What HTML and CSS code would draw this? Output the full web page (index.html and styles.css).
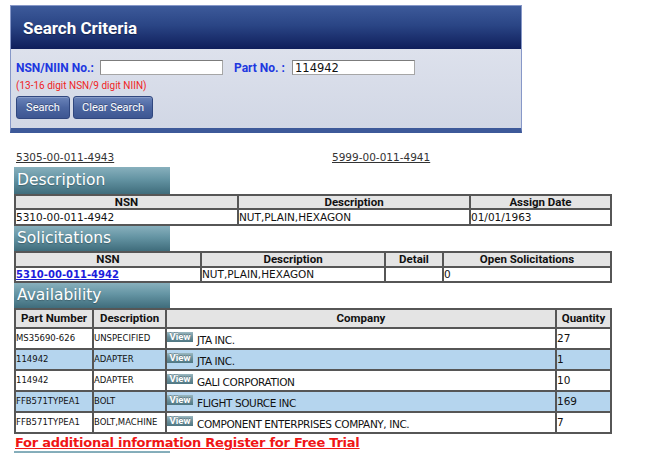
FILE: index.html
```html
<!DOCTYPE html>
<html lang="en">
<head>
<meta charset="utf-8">
<title>NSN Search</title>
<link rel="stylesheet" href="styles.css">
</head>
<body>
<div class="panel">
  <div class="panel-head">Search Criteria</div>
  <div class="panel-body">
    <div class="field-row">
      <span class="lbl lbl-nsn">NSN/NIIN No.:</span>
      <input class="txt" type="text" value="">
      <span class="lbl lbl-part">Part No. :</span>
      <input class="txt" type="text" value="114942">
    </div>
    <div class="hint">(13-16 digit NSN/9 digit NIIN)</div>
    <div class="btns">
      <button class="btn btn-search" type="button">Search</button>
      <button class="btn btn-clear" type="button">Clear Search</button>
    </div>
  </div>
</div>

<div class="content">
  <div class="nav-links">
    <a class="nav-link" href="#">5305-00-011-4943</a>
    <a class="nav-link" href="#">5999-00-011-4941</a>
  </div>

  <div class="tab tab-desc">Description</div>
  <table class="grid desc">
    <thead><tr><th>NSN</th><th>Description</th><th>Assign Date</th></tr></thead>
    <tbody><tr><td>5310-00-011-4942</td><td>NUT,PLAIN,HEXAGON</td><td>01/01/1963</td></tr></tbody>
  </table>

  <div class="tab">Solicitations</div>
  <table class="grid solic">
    <thead><tr><th>NSN</th><th>Description</th><th>Detail</th><th>Open Solicitations</th></tr></thead>
    <tbody><tr><td><a class="nsn-link" href="#">5310-00-011-4942</a></td><td>NUT,PLAIN,HEXAGON</td><td></td><td>0</td></tr></tbody>
  </table>

  <div class="tab">Availability</div>
  <table class="grid avail">
    <thead><tr><th>Part Number</th><th>Description</th><th>Company</th><th>Quantity</th></tr></thead>
    <tbody>
      <tr><td class="small">MS35690-626</td><td class="small">UNSPECIFIED</td><td><div class="co"><span class="view">View</span><span class="co-name">JTA INC.</span></div></td><td>27</td></tr>
      <tr><td class="small">114942</td><td class="small">ADAPTER</td><td><div class="co"><span class="view">View</span><span class="co-name">JTA INC.</span></div></td><td>1</td></tr>
      <tr><td class="small">114942</td><td class="small">ADAPTER</td><td><div class="co"><span class="view">View</span><span class="co-name">GALI CORPORATION</span></div></td><td>10</td></tr>
      <tr><td class="small">FFB571TYPEA1</td><td class="small">BOLT</td><td><div class="co"><span class="view">View</span><span class="co-name">FLIGHT SOURCE INC</span></div></td><td>169</td></tr>
      <tr><td class="small">FFB571TYPEA1</td><td class="small">BOLT,MACHINE</td><td><div class="co"><span class="view">View</span><span class="co-name">COMPONENT ENTERPRISES COMPANY, INC.</span></div></td><td>7</td></tr>
    </tbody>
  </table>

  <a class="promo" href="#">For additional information Register for Free Trial</a>
  <div class="tab tab-next"></div>
</div>
</body>
</html>
```

FILE: styles.css
```css
* { box-sizing: border-box; }

body {
  margin: 0;
  background: #fff;
  font-family: "DejaVu Sans", sans-serif;
  color: #111;
}

/* ---------- search panel ---------- */
.panel {
  width: 512px;
  margin: 5px 0 0 10px;
  border: 1px solid #8798c8;
  border-bottom: 5px solid #3d5999;
}

.panel-head {
  height: 43px;
  display: flex;
  align-items: center;
  padding-left: 12px;
  background: linear-gradient(#3d5a9a, #2a4585 45%, #0f1e5b);
  color: #fff;
  font: bold 17px Roboto, sans-serif;
  text-shadow: 0 1px 1px rgba(0, 0, 0, 0.35);
}

.panel-body {
  height: 79px;
  padding: 11px 5px 0;
  background: linear-gradient(#dde1ec, #d1d7e5);
}

.field-row {
  display: flex;
  align-items: center;
  height: 15px;
}

.lbl {
  font: bold 12px Roboto, sans-serif;
  color: #2037e0;
  white-space: nowrap;
}

.lbl-nsn { width: 84px; }
.lbl-part { width: 58px; margin-left: 11px; }

.txt {
  width: 123px;
  height: 15px;
  margin: 0;
  padding: 0 2px;
  border: 1px solid #a6a6a6;
  border-top-color: #7c7c7c;
  border-left-color: #8c8c8c;
  background: #fff;
  font: 11.5px "DejaVu Sans", sans-serif;
  color: #111;
}

.hint {
  margin-top: 5px;
  height: 12px;
  font: 10px/12px Roboto, sans-serif;
  color: #f02424;
}

.btns {
  display: flex;
  gap: 3px;
  margin-top: 4px;
}

.btn {
  height: 23px;
  padding: 0;
  border: 1px solid #30477f;
  border-radius: 3px;
  background: linear-gradient(#6b84ba, #4c66a1 50%, #3d5692);
  color: #fff;
  font: 11px Roboto, sans-serif;
  text-shadow: 0 -1px 0 rgba(0, 0, 0, 0.3);
  box-shadow: inset 0 1px 0 rgba(255, 255, 255, 0.2);
}

.btn-search { width: 54px; }
.btn-clear { width: 80px; }

/* ---------- content ---------- */
.content {
  width: 598px;
  margin-left: 14px;
}

.nav-links {
  display: grid;
  grid-template-columns: 316px auto;
  height: 15px;
  margin-top: 17px;
  padding-left: 2px;
  line-height: 15px;
}

.nav-link {
  font-size: 10.5px;
  color: #333;
  text-decoration: underline;
}

.tab {
  width: 156px;
  height: 25px;
  padding-left: 3px;
  background: linear-gradient(#88b0bd, #6494a3 45%, #3f6c7b);
  color: #fff;
  font-size: 15.5px;
  line-height: 25px;
  text-shadow: 0 1px 1px rgba(0, 0, 0, 0.25);
}

.tab-desc {
  height: 27px;
  line-height: 27px;
  margin-top: 2px;
}

.tab-next { margin-top: 0; }

.grid {
  width: 598px;
  table-layout: fixed;
  border-collapse: separate;
  border-spacing: 0;
  border: 1px solid #565656;
}

.grid th,
.grid td {
  border: 1px solid #565656;
  padding: 0;
  white-space: nowrap;
  overflow: hidden;
}

.grid th {
  background: #e4e4e4;
  font: bold 11.5px Roboto, sans-serif;
  color: #111;
  text-align: center;
}

.grid td {
  font-size: 10.5px;
  text-align: left;
  color: #111;
}

.desc th { line-height: 12px; }
.desc td { line-height: 14px; }
.desc th:nth-child(1) { width: 223px; }
.desc th:nth-child(2) { width: 232px; }

.solic th { line-height: 13px; }
.solic td { line-height: 13px; }
.solic th:nth-child(1) { width: 186px; }
.solic th:nth-child(2) { width: 184px; }
.solic th:nth-child(3) { width: 58px; }

.nsn-link {
  color: #1c1cdc;
  font-weight: bold;
  font-size: 10px;
  text-decoration: underline;
}

.avail th { line-height: 17px; }
.avail td { line-height: 19px; height: 19px; }
.avail th:nth-child(1) { width: 78px; }
.avail th:nth-child(2) { width: 73px; }
.avail th:nth-child(3) { width: 390px; }

.avail tbody tr:nth-child(even) td { background: #b5d5ee; }

.avail td.small { font-size: 8.5px; }

.co {
  display: flex;
  align-items: flex-start;
  height: 19px;
  overflow: hidden;
}

.view {
  flex: none;
  width: 26px;
  height: 10px;
  margin-top: 3px;
  background: linear-gradient(#9ab7bf, #6b909b 50%, #4f7783);
  color: #fff;
  font: bold 9.5px/10px Roboto, sans-serif;
  text-align: center;
  text-shadow: 0 -1px 0 rgba(0, 0, 0, 0.25);
}

.co-name {
  margin-left: 4px;
  padding-top: 5px;
  font-size: 10.5px;
  letter-spacing: -0.4px;
  line-height: 12px;
}

.promo {
  display: block;
  margin-top: 1px;
  padding-left: 1px;
  line-height: 16px;
  font-size: 13px;
  letter-spacing: -0.25px;
  font-weight: bold;
  color: #f01616;
  text-decoration: underline;
}
```
